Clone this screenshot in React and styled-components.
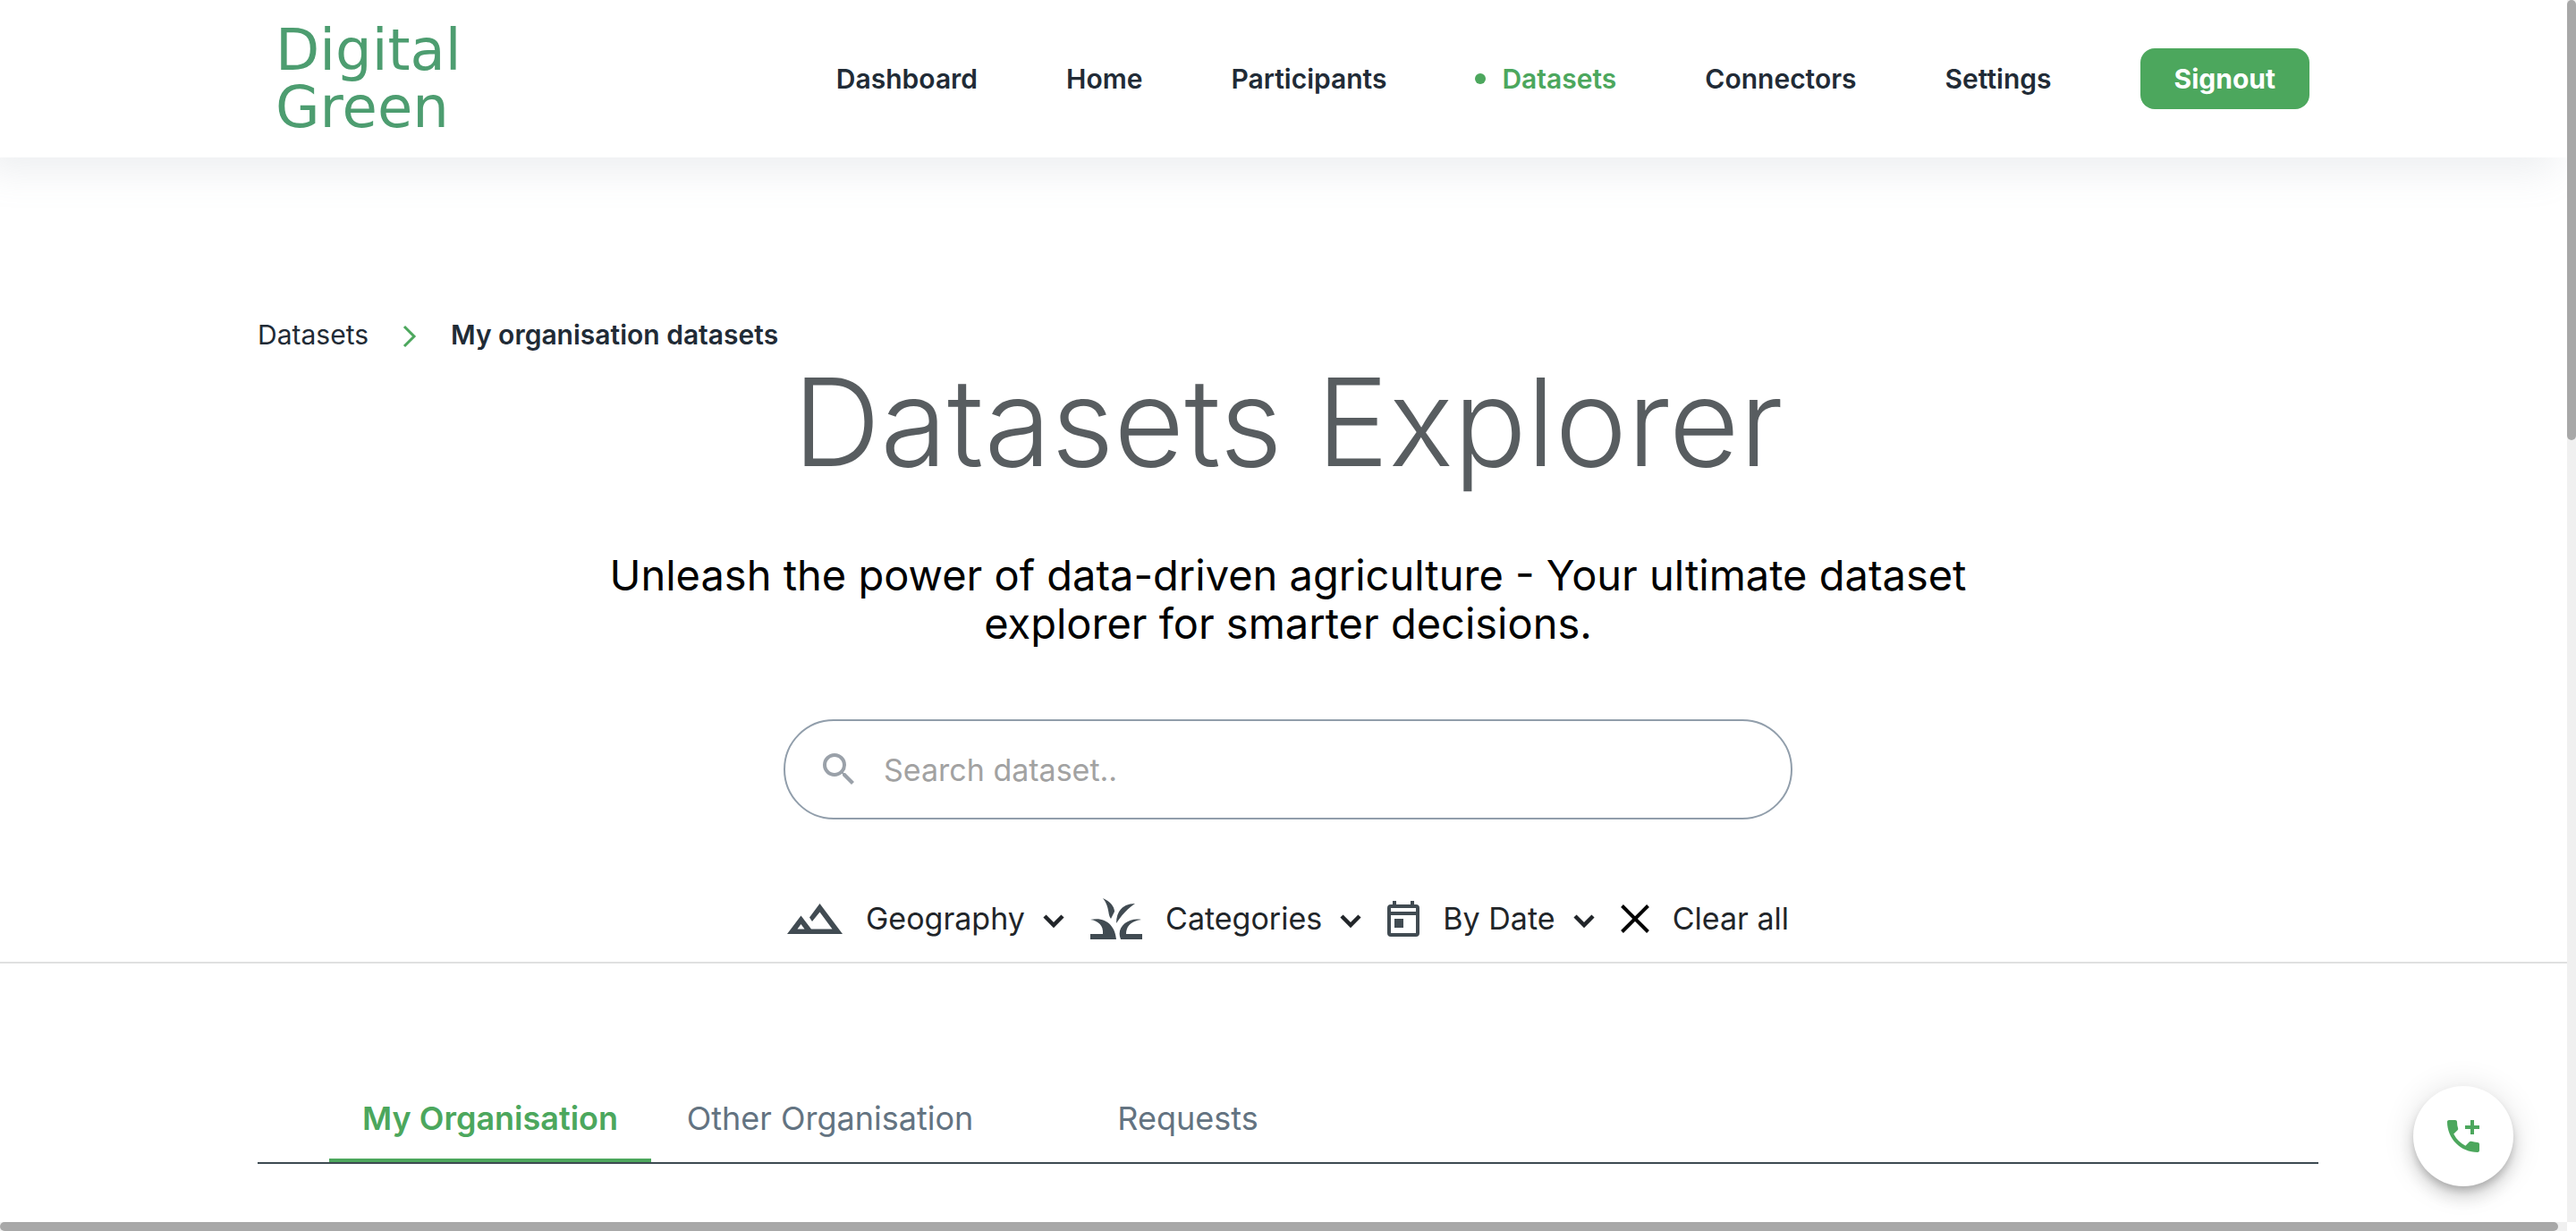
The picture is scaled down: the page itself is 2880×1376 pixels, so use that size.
import React, { useState } from "react";
import styled, { createGlobalStyle, css } from "styled-components";
import { MdSearch, MdAddIcCall } from "react-icons/md";

const GREEN = "#4ca75d";
const INK = "#212b36";

const GlobalStyle = createGlobalStyle`
  * { box-sizing: border-box; }
  body {
    margin: 0;
    background: #fff;
    color: ${INK};
    font-family: Inter, "Open Sans", sans-serif;
    overflow: hidden;
  }
  button, input { font: inherit; color: inherit; }
`;

const Page = styled.div`
  min-height: 100vh;
  background: #fff;
`;

const Header = styled.header`
  display: flex;
  align-items: center;
  justify-content: space-between;
  height: 176px;
  padding: 0 298px 0 10vw;
  box-shadow: -20px 20px 40px -4px rgba(145, 158, 171, 0.16);
`;

const Logo = styled.a`
  display: flex;
  flex-direction: column;
  padding-left: 20px;
  color: #4d9d70;
  font-family: "DejaVu Sans", sans-serif;
  font-size: 64px;
  line-height: 64px;
  text-decoration: none;
`;

const Nav = styled.nav`
  display: flex;
  align-items: center;
  gap: 99px;
`;

const NavLink = styled.a`
  display: flex;
  align-items: center;
  gap: 18px;
  font-size: 30px;
  font-weight: 600;
  line-height: 36px;
  text-decoration: none;
  color: ${(p) => (p.$active ? GREEN : INK)};
  ${(p) =>
    p.$active &&
    css`
      &::before {
        content: "";
        width: 12px;
        height: 12px;
        border-radius: 50%;
        background: ${GREEN};
      }
    `}
`;

const SignoutButton = styled.button`
  height: 68px;
  padding: 0 38px;
  border: 0;
  border-radius: 16px;
  background: ${GREEN};
  color: #fff;
  font-size: 30px;
  font-weight: 700;
  cursor: pointer;
`;

const Hero = styled.section`
  padding: 178px 10vw 19px;
  border-bottom: 2px solid #dfe0e0;
`;

const Breadcrumb = styled.nav`
  display: flex;
  align-items: center;
  font-size: 30px;
  line-height: 40px;
`;

const CrumbLink = styled.a`
  color: ${INK};
  text-decoration: none;
`;

const CrumbArrow = styled.svg`
  width: 16px;
  height: 26px;
  margin: 4px 38px 0;
`;

const Current = styled.span`
  font-weight: 600;
`;

const Title = styled.h1`
  margin: 0;
  text-align: center;
  font-size: 136px;
  font-weight: 300;
  line-height: 156px;
  color: #585d60;
`;

const Subtitle = styled.p`
  max-width: 1560px;
  margin: 66px auto 0;
  text-align: center;
  font-size: 47px;
  line-height: 54px;
  color: #000;
`;

const SearchBox = styled.label`
  display: flex;
  align-items: center;
  gap: 26px;
  max-width: 1128px;
  height: 112px;
  margin: 80px auto 0;
  padding: 0 36px;
  border: 2px solid #919eab;
  border-radius: 56px;
  color: #9aa1a9;
  svg { width: 48px; height: 48px; flex: none; }
`;

const SearchInput = styled.input`
  flex: 1;
  min-width: 0;
  padding: 0;
  border: 0;
  outline: 0;
  background: transparent;
  color: ${INK};
  font-size: 34px;
  &::placeholder { color: #a2a2a2; opacity: 1; }
`;

const Filters = styled.div`
  display: flex;
  align-items: center;
  justify-content: space-between;
  max-width: 1120px;
  height: 58px;
  margin: 82px auto 0;
`;

const FilterButton = styled.button`
  display: flex;
  align-items: center;
  gap: 26px;
  padding: 0;
  border: 0;
  background: transparent;
  color: #212529;
  font-size: 34px;
  line-height: 40px;
  cursor: pointer;
`;

const FilterLabel = styled.span`
  display: flex;
  align-items: center;
  gap: 20px;
`;

const Glyph = styled.svg`
  width: ${(p) => p.$w}px;
  height: ${(p) => p.$h}px;
  flex: none;
`;

const ChevronGlyph = styled(Glyph)`
  margin-top: 6px;
`;

const TabList = styled.div`
  display: flex;
  margin: 128px 10vw 0;
  padding-left: 80px;
  border-bottom: 2px solid #3d4a52;
`;

const Tab = styled.button`
  width: ${(p) => (p.$wide ? 400 : 360)}px;
  height: 94px;
  padding: 0;
  border: 0;
  border-bottom: 4px solid ${(p) => (p.$active ? GREEN : "transparent")};
  background: transparent;
  font-size: 36px;
  line-height: 40px;
  font-weight: ${(p) => (p.$active ? 600 : 400)};
  color: ${(p) => (p.$active ? GREEN : "#637381")};
  cursor: pointer;
`;

const CallButton = styled.button`
  position: fixed;
  right: 70px;
  bottom: 50px;
  display: grid;
  place-items: center;
  width: 112px;
  height: 112px;
  border: 0;
  border-radius: 50%;
  background: #fff;
  color: ${GREEN};
  box-shadow: 0 6px 10px -2px rgba(0, 0, 0, 0.2), 0 12px 20px rgba(0, 0, 0, 0.14), 0 2px 36px rgba(0, 0, 0, 0.12);
  cursor: pointer;
`;

const ScrollTrack = styled.div`
  position: fixed;
  background: #f0f0f0;
  ${(p) => (p.$vertical ? "top: 0; right: 0; bottom: 10px; width: 10px;" : "left: 0; right: 10px; bottom: 0; height: 10px;")}
`;

const ScrollThumb = styled.div`
  border-radius: 5px;
  background: #a8a8a8;
  ${(p) => (p.$vertical ? "height: 36%; width: 10px;" : "height: 10px; margin-right: 10px;")}
`;

const Chevron = () => (
  <ChevronGlyph $w={24} $h={16} viewBox="0 0 24 16" fill="none" aria-hidden="true">
    <path d="M2 2 12 12 22 2" stroke="#212529" strokeWidth="4.500" />
  </ChevronGlyph>
);

const Landscape = () => (
  <Glyph $w={62} $h={34} viewBox="0 0 62 34" aria-hidden="true">
    <path
      fill="#414b52"
      fillRule="evenodd"
      d="M36.500 0 62 34H0L15.500 13.500 27 28.500H50.500L36.500 9.500 28 20 25 15.500ZM11.500 28.500H19.500L15.500 23Z"
    />
  </Glyph>
);

const Grass = () => (
  <Glyph $w={58} $h={46} viewBox="0 0 58 46" fill="#414b52" aria-hidden="true">
    <path d="M14 0C23 4 27 10 27 15L23 23C19 18 22 10 14 0Z" />
    <path d="M50 6C41 12 36 18 29 28C29 14 37 6 50 6Z" />
    <path d="M0 24C17 20 28 31 29 46H0V40H14C15 31 9 25 0 24Z" />
    <path d="M57 24C46 25 40 31 40 40H58V46H34C28 32 43 21 57 24Z" />
  </Glyph>
);

const Calendar = () => (
  <Glyph $w={36} $h={40} viewBox="0 0 36 40" aria-hidden="true">
    <path
      fill="#414b52"
      fillRule="evenodd"
      d="M6 0H10V4H26V0H30V4H32Q36 4 36 8V36Q36 40 32 40H4Q0 40 0 36V8Q0 4 4 4H6ZM4 8V12H32V8ZM4 16V36H32V16ZM8 20H18V30H8Z"
    />
  </Glyph>
);

const Cross = () => (
  <Glyph $w={32} $h={32} viewBox="0 0 32 32" fill="none" aria-hidden="true">
    <path d="M1.500 1.500 30.500 30.500M30.500 1.500 1.500 30.500" stroke="#000" strokeWidth="4" />
  </Glyph>
);

const NAV_ITEMS = ["Dashboard", "Home", "Participants", "Datasets", "Connectors", "Settings"];
const FILTERS = [
  { label: "Geography", Icon: Landscape },
  { label: "Categories", Icon: Grass },
  { label: "By Date", Icon: Calendar },
];
const TABS = [
  { name: "My Organisation", wide: false },
  { name: "Other Organisation", wide: true },
  { name: "Requests", wide: true },
];

export default function App() {
  const [tab, setTab] = useState(TABS[0].name);
  const [query, setQuery] = useState("");

  return (
    <Page>
      <GlobalStyle />
      <Header>
        <Logo href="#">
          <span>Digital</span>
          <span>Green</span>
        </Logo>
        <Nav aria-label="Main">
          {NAV_ITEMS.map((item) => (
            <NavLink key={item} href="#" $active={item === "Datasets"}>
              {item}
            </NavLink>
          ))}
          <SignoutButton type="button">Signout</SignoutButton>
        </Nav>
      </Header>
      <main>
        <Hero>
          <Breadcrumb aria-label="Breadcrumb">
            <CrumbLink href="#">Datasets</CrumbLink>
            <CrumbArrow viewBox="0 0 16 26" fill="none" aria-hidden="true">
              <path d="M2 2 13 13 2 24" stroke={GREEN} strokeWidth="3" />
            </CrumbArrow>
            <Current aria-current="page">My organisation datasets</Current>
          </Breadcrumb>
          <Title>Datasets Explorer</Title>
          <Subtitle>
            Unleash the power of data-driven agriculture - Your ultimate dataset explorer for smarter decisions.
          </Subtitle>
          <SearchBox>
            <MdSearch aria-hidden="true" />
            <SearchInput
              type="text"
              aria-label="Search dataset"
              placeholder="Search dataset.."
              value={query}
              onChange={(e) => setQuery(e.target.value)}
            />
          </SearchBox>
          <Filters>
            {FILTERS.map(({ label, Icon }) => (
              <FilterButton key={label} type="button">
                <Icon />
                <FilterLabel>
                  {label}
                  <Chevron />
                </FilterLabel>
              </FilterButton>
            ))}
            <FilterButton type="button" onClick={() => setQuery("")}>
              <Cross />
              Clear all
            </FilterButton>
          </Filters>
        </Hero>
        <TabList role="tablist">
          {TABS.map(({ name, wide }) => (
            <Tab
              key={name}
              type="button"
              role="tab"
              aria-selected={tab === name}
              $active={tab === name}
              $wide={wide}
              onClick={() => setTab(name)}
            >
              {name}
            </Tab>
          ))}
        </TabList>
      </main>
      <CallButton type="button" aria-label="Call support">
        <MdAddIcCall size={48} />
      </CallButton>
      <ScrollTrack $vertical>
        <ScrollThumb $vertical />
      </ScrollTrack>
      <ScrollTrack>
        <ScrollThumb />
      </ScrollTrack>
    </Page>
  );
}
